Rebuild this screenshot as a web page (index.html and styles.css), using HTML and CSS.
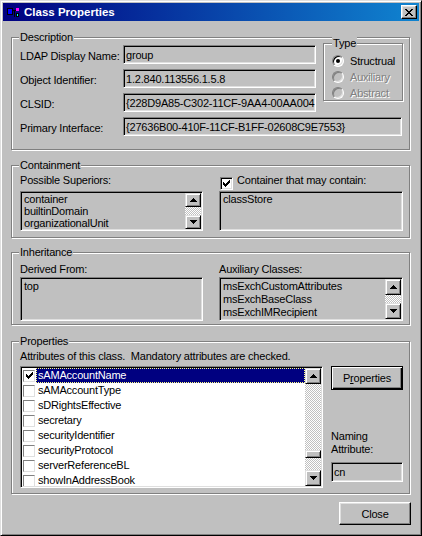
FILE: index.html
```html
<!DOCTYPE html>
<html lang="en">
<head>
<meta charset="utf-8">
<title>Class Properties</title>
<link rel="stylesheet" href="styles.css">
</head>
<body>
<div class="window">
  <div class="titlebar">
    <svg class="ticon" width="16" height="16" viewBox="0 0 16 16" shape-rendering="crispEdges">
      <rect x="2" y="4" width="6" height="7" fill="#000"/>
      <rect x="3" y="5" width="4" height="5" fill="#0000ff"/>
      <rect x="8" y="6" width="4" height="1" fill="#000"/>
      <rect x="9" y="6" width="1" height="7" fill="#000"/>
      <rect x="11" y="4" width="3" height="3" fill="#ff00ff"/>
      <rect x="11" y="9" width="3" height="4" fill="#000"/>
      <rect x="12" y="10" width="1" height="2" fill="#00ffff"/>
    </svg>
    <span class="ttext">Class Properties</span>
    <span class="tclose"><svg width="8" height="7" viewBox="0 0 8 7" shape-rendering="crispEdges"><path d="M0 0h2v1H0z M6 0h2v1H6z M1 1h2v1H1z M5 1h2v1H5z M2 2h4v1H2z M3 3h2v1H3z M2 4h4v1H2z M1 5h2v1H1z M5 5h2v1H5z M0 6h2v1H0z M6 6h2v1H6z" fill="#000"/></svg></span>
  </div>
  <div class="client">
    <div class="group g-desc">
      <span class="glabel">Description</span>
      <div class="desc-grid">
        <span class="lbl">LDAP Display Name:</span>
        <div class="field">group</div>
        <div class="group typebox">
          <span class="glabel">Type</span>
          <div class="radio-row"><span class="radio checked"></span><span>Structrual</span></div>
          <div class="radio-row"><span class="radio off"></span><span class="dis">Auxiliary</span></div>
          <div class="radio-row"><span class="radio off"></span><span class="dis">Abstract</span></div>
        </div>
        <span class="lbl">Object Identifier:</span>
        <div class="field">1.2.840.113556.1.5.8</div>
        <span class="lbl">CLSID:</span>
        <div class="field">{228D9A85-C302-11CF-9AA4-00AA004</div>
        <span class="lbl">Primary Interface:</span>
        <div class="field wide">{27636B00-410F-11CF-B1FF-02608C9E7553}</div>
      </div>
    </div>

    <div class="group g-cont">
      <span class="glabel">Containment</span>
      <div class="two-col">
        <div class="col">
          <div class="hdr">Possible Superiors:</div>
          <div class="list gray h40">
            <div class="items tight"><div>container</div><div>builtinDomain</div><div>organizationalUnit</div></div>
            <div class="vscroll short">
              <span class="sbtn"><svg width="7" height="4" viewBox="0 0 7 4" shape-rendering="crispEdges"><path d="M3 0h1v1H3z M2 1h3v1H2z M1 2h5v1H1z M0 3h7v1H0z" fill="#000"/></svg></span>
              <span class="trough"></span>
              <span class="sbtn"><svg width="7" height="4" viewBox="0 0 7 4" shape-rendering="crispEdges"><path d="M0 0h7v1H0z M1 1h5v1H1z M2 2h3v1H2z M3 3h1v1H3z" fill="#000"/></svg></span>
            </div>
          </div>
        </div>
        <div class="col">
          <div class="hdr chk-hdr"><span class="checkbox"><svg width="7" height="7" viewBox="0 0 7 7" shape-rendering="crispEdges"><path d="M6 0h1v1H6z M5 1h2v1H5z M0 2h1v1H0z M4 2h3v1H4z M0 3h2v1H0z M3 3h3v1H3z M0 4h5v1H0z M1 5h3v1H1z M2 6h1v1H2z" fill="#000"/></svg></span><span>Container that may contain:</span></div>
          <div class="list gray h40">
            <div class="items tight"><div>classStore</div></div>
          </div>
        </div>
      </div>
    </div>

    <div class="group g-inh">
      <span class="glabel">Inheritance</span>
      <div class="two-col">
        <div class="col">
          <div class="hdr">Derived From:</div>
          <div class="list gray h44">
            <div class="items"><div>top</div></div>
          </div>
        </div>
        <div class="col">
          <div class="hdr">Auxiliary Classes:</div>
          <div class="list gray h44">
            <div class="items"><div>msExchCustomAttributes</div><div>msExchBaseClass</div><div>msExchIMRecipient</div></div>
            <div class="vscroll">
              <span class="sbtn"><svg width="7" height="4" viewBox="0 0 7 4" shape-rendering="crispEdges"><path d="M3 0h1v1H3z M2 1h3v1H2z M1 2h5v1H1z M0 3h7v1H0z" fill="#000"/></svg></span>
              <span class="trough"></span>
              <span class="sbtn"><svg width="7" height="4" viewBox="0 0 7 4" shape-rendering="crispEdges"><path d="M0 0h7v1H0z M1 1h5v1H1z M2 2h3v1H2z M3 3h1v1H3z" fill="#000"/></svg></span>
            </div>
          </div>
        </div>
      </div>
    </div>

    <div class="group g-props">
      <span class="glabel">Properties</span>
      <div class="hdr">Attributes of this class.&nbsp; Mandatory attributes are checked.</div>
      <div class="props-row">
        <div class="list white plist">
          <div class="items pitems">
            <div class="pitem sel"><span class="lcb"><svg width="7" height="7" viewBox="0 0 7 7" shape-rendering="crispEdges"><path d="M6 0h1v1H6z M5 1h2v1H5z M0 2h1v1H0z M4 2h3v1H4z M0 3h2v1H0z M3 3h3v1H3z M0 4h5v1H0z M1 5h3v1H1z M2 6h1v1H2z" fill="#000"/></svg></span><span class="ptext">sAMAccountName</span></div>
            <div class="pitem"><span class="lcb"></span><span class="ptext">sAMAccountType</span></div>
            <div class="pitem"><span class="lcb"></span><span class="ptext">sDRightsEffective</span></div>
            <div class="pitem"><span class="lcb"></span><span class="ptext">secretary</span></div>
            <div class="pitem"><span class="lcb"></span><span class="ptext">securityIdentifier</span></div>
            <div class="pitem"><span class="lcb"></span><span class="ptext">securityProtocol</span></div>
            <div class="pitem"><span class="lcb"></span><span class="ptext">serverReferenceBL</span></div>
            <div class="pitem"><span class="lcb"></span><span class="ptext">showInAddressBook</span></div>
          </div>
          <div class="vscroll">
            <span class="sbtn"><svg width="7" height="4" viewBox="0 0 7 4" shape-rendering="crispEdges"><path d="M3 0h1v1H3z M2 1h3v1H2z M1 2h5v1H1z M0 3h7v1H0z" fill="#000"/></svg></span>
            <span class="trough"></span>
            <span class="thumb"></span>
            <span class="trough t12"></span>
            <span class="sbtn"><svg width="7" height="4" viewBox="0 0 7 4" shape-rendering="crispEdges"><path d="M0 0h7v1H0z M1 1h5v1H1z M2 2h3v1H2z M3 3h1v1H3z" fill="#000"/></svg></span>
          </div>
        </div>
        <div class="pside">
          <div class="btn default"><span>P<u>r</u>operties</span></div>
          <div class="naming">Naming<br>Attribute:</div>
          <div class="field nfield">cn</div>
        </div>
      </div>
    </div>

    <div class="footer"><div class="btn close">Close</div></div>
  </div>
</div>
</body>
</html>
```
FILE: styles.css
```css
* { box-sizing: border-box; }
html, body { margin: 0; padding: 0; }
body {
  background: #c0c0c0;
  font-family: "Liberation Sans", Arial, sans-serif;
  font-size: 11px;
  letter-spacing: -0.2px;
  color: #000;
}
.window {
  width: 422px;
  height: 536px;
  background: #c0c0c0;
  border: 1px solid;
  border-color: #dfdfdf #000 #000 #dfdfdf;
  box-shadow: inset 1px 1px 0 #fff, inset -1px -1px 0 #808080;
  padding: 2px;
  display: flex;
  flex-direction: column;
  overflow: hidden;
}
.titlebar {
  flex: 0 0 18px;
  display: flex;
  align-items: center;
  padding: 0 2px;
  background: linear-gradient(to right, #000080, #1084d0);
  color: #fff;
}
.ticon { flex: 0 0 16px; display: block; }
.ttext {
  flex: 1;
  margin-left: 3px;
  font-weight: bold;
  font-size: 11.5px;
  letter-spacing: 0;
  white-space: nowrap;
}
.tclose {
  width: 16px;
  height: 14px;
  background: #c0c0c0;
  border: 1px solid;
  border-color: #fff #000 #000 #fff;
  box-shadow: inset -1px -1px 0 #808080, inset 1px 1px 0 #dfdfdf;
  display: flex;
  align-items: center;
  justify-content: center;
}
.tclose svg, .sbtn svg, .checkbox svg, .lcb svg { display: block; }

.client {
  flex: 1;
  display: flex;
  flex-direction: column;
  padding: 0 8px;
}
.group {
  position: relative;
  border: 1px solid #808080;
  box-shadow: inset 1px 1px 0 #fff, 1px 1px 0 #fff;
}
.client > .group { width: 399px; }
.glabel {
  position: absolute;
  top: -7px;
  left: 7px;
  padding: 0 1px;
  background: #c0c0c0;
  line-height: 13px;
  white-space: nowrap;
}

/* Description */
.g-desc { margin-top: 16px; height: 113px; padding: 7px 0 0 8px; }
.desc-grid {
  display: grid;
  grid-template-columns: 103px 193px 86px;
  grid-template-rows: repeat(4, 19px);
  row-gap: 5px;
}
.lbl { line-height: 15px; padding-top: 4px; white-space: nowrap; }
.field {
  background: #c0c0c0;
  border: 1px solid;
  border-color: #808080 #fff #fff #808080;
  box-shadow: inset 1px 1px 0 #000, inset -1px -1px 0 #dfdfdf;
  padding: 3px 2px 0 2px;
  line-height: 13px;
  white-space: nowrap;
  overflow: hidden;
}
.field.wide { grid-column: 2 / 4; }
.typebox {
  grid-column: 3;
  grid-row: 1 / 4;
  align-self: start;
  margin: -2px 0 0 7px;
  width: 80px;
  height: 58px;
  padding: 9px 0 0 8px;
}
.typebox .glabel { left: 8px; }
.radio-row { display: flex; align-items: center; height: 16px; gap: 6px; white-space: nowrap; }
.radio {
  position: relative;
  flex: 0 0 12px;
  height: 12px;
  border-radius: 50%;
  border: 1px solid;
  border-color: #808080 #fff #fff #808080;
  box-shadow: inset 1px 1px 0 #000, inset -1px -1px 0 #dfdfdf;
  background: #fff;
}
.radio.off { background: #c0c0c0; box-shadow: inset 1px 1px 0 #808080, inset -1px -1px 0 #dfdfdf; }
.radio.checked::after {
  content: "";
  position: absolute;
  left: 3px;
  top: 3px;
  width: 4px;
  height: 4px;
  border-radius: 50%;
  background: #000;
}
.dis { color: #808080; text-shadow: 1px 1px 0 #fff; }

/* Containment / Inheritance */
.g-cont { margin-top: 15px; height: 73px; padding: 8px 0 0 8px; }
.g-inh { margin-top: 14px; height: 73px; padding: 10px 0 0 8px; }
.two-col { display: grid; grid-template-columns: 183px 184px; column-gap: 16px; }
.hdr { line-height: 13px; white-space: nowrap; }
.g-cont .hdr { height: 17px; }
.g-inh .hdr { height: 14px; }
.chk-hdr { display: flex; align-items: flex-start; }
.checkbox {
  flex: 0 0 13px;
  height: 13px;
  margin: 3px 4px 0 1px;
  background: #fff;
  border: 1px solid;
  border-color: #808080 #fff #fff #808080;
  box-shadow: inset 1px 1px 0 #000, inset -1px -1px 0 #dfdfdf;
  display: flex;
  align-items: center;
  justify-content: center;
}
.list {
  display: flex;
  border: 1px solid;
  border-color: #808080 #fff #fff #808080;
  box-shadow: inset 1px 1px 0 #000, inset -1px -1px 0 #dfdfdf;
  padding: 1px;
  overflow: hidden;
}
.list.gray { background: #c0c0c0; }
.list.white { background: #fff; }
.h40 { height: 40px; }
.h44 { height: 44px; }
.items {
  flex: 1;
  min-width: 0;
  padding: 1px 0 0 2px;
  line-height: 13px;
  white-space: nowrap;
  overflow: hidden;
}
.items.tight { padding-top: 0; line-height: 12px; }
.vscroll { flex: 0 0 16px; display: flex; flex-direction: column; }
.sbtn, .thumb {
  flex: 0 0 16px;
  background: #c0c0c0;
  border: 1px solid;
  border-color: #dfdfdf #000 #000 #dfdfdf;
  box-shadow: inset 1px 1px 0 #fff, inset -1px -1px 0 #808080;
  display: flex;
  align-items: center;
  justify-content: center;
}
.vscroll.short .sbtn { flex-basis: 14px; }
.trough {
  flex: 1;
  background: repeating-conic-gradient(#c0c0c0 0 25%, #fff 0 50%) 0 0 / 2px 2px;
}
.trough.t12 { flex: 0 0 12px; }
.thumb { flex: 0 0 8px; }

/* Properties */
.g-props { margin-top: 16px; height: 153px; padding: 8px 0 0 8px; }
.g-props .hdr { height: 16px; }
.props-row { display: flex; gap: 8px; }
.plist { flex: 0 0 303px; height: 122px; }
.items.pitems { padding: 0; }
.pitem { display: flex; align-items: center; height: 15px; }
.lcb {
  flex: 0 0 12px;
  height: 12px;
  margin: 0 1px;
  background: #fff;
  border: 1px solid;
  border-color: #808080 #dfdfdf #dfdfdf #808080;
  display: flex;
  align-items: center;
  justify-content: center;
}
.ptext {
  flex: 1;
  height: 15px;
  line-height: 13px;
  padding-left: 1px;
  border: 1px dotted transparent;
}
.sel .ptext { background: #000080; color: #fff; border-color: #ffff80; }
.pside { flex: 0 0 72px; display: flex; flex-direction: column; }
.btn {
  height: 24px;
  display: flex;
  align-items: center;
  justify-content: center;
  background: #c0c0c0;
  border: 1px solid;
  border-color: #fff #000 #000 #fff;
  box-shadow: inset -1px -1px 0 #808080, inset 1px 1px 0 #dfdfdf;
  white-space: nowrap;
}
.btn.default {
  border-color: #000;
  box-shadow: inset 1px 1px 0 #fff, inset -1px -1px 0 #000, inset -2px -2px 0 #808080;
}
.naming { margin-top: 40px; line-height: 13px; }
.nfield { margin-top: 6px; height: 20px; }
.footer { display: flex; justify-content: flex-end; margin-top: 8px; }
.btn.close { width: 72px; height: 23px; }
```
